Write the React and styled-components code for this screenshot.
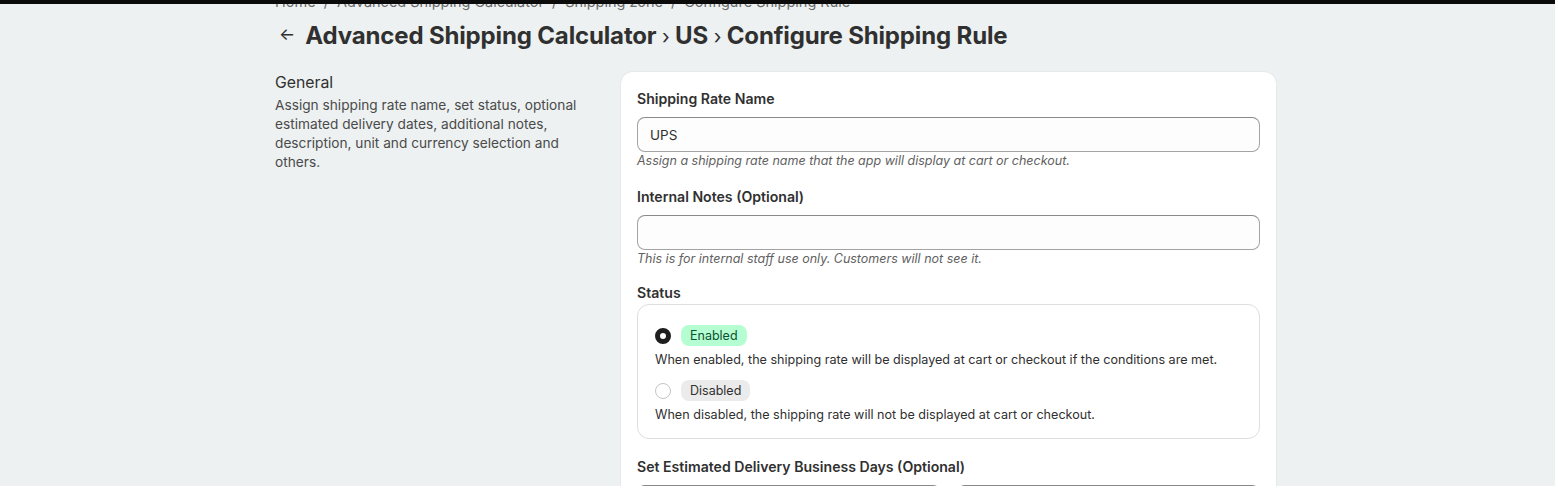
import React from 'react';
import styled, { createGlobalStyle } from 'styled-components';

const GlobalStyle = createGlobalStyle`
  html, body {
    margin: 0;
    padding: 0;
    background: #ffffff;
  }
  body {
    font-family: Inter, "Noto Sans", "Liberation Sans", sans-serif;
    color: #303030;
    -webkit-font-smoothing: antialiased;
  }
`;

const App = () => (
  <>
    <GlobalStyle />
    <Page>
      <Content>
        <Breadcrumb>
          <span>Home</span>
          <Sep>/</Sep>
          <span>Advanced Shipping Calculator</span>
          <Sep>/</Sep>
          <span>Shipping zone</span>
          <Sep>/</Sep>
          <span>Configure Shipping Rule</span>
        </Breadcrumb>
        <TitleRow>
          <BackArrow>←</BackArrow>
          <Title>
            Advanced Shipping Calculator <Chevron>›</Chevron> US <Chevron>›</Chevron> Configure Shipping Rule
          </Title>
        </TitleRow>
        <Layout>
          <Aside>
            <AsideTitle>General</AsideTitle>
            <AsideText>
              Assign shipping rate name, set status, optional estimated delivery dates, additional notes,
              description, unit and currency selection and others.
            </AsideText>
          </Aside>
          <Card>
            <Field>
              <Label>Shipping Rate Name</Label>
              <Input defaultValue="UPS" />
              <Help>Assign a shipping rate name that the app will display at cart or checkout.</Help>
            </Field>
            <Field>
              <Label>Internal Notes (Optional)</Label>
              <Input defaultValue="" />
              <Help>This is for internal staff use only. Customers will not see it.</Help>
            </Field>
            <Field>
              <Label $tight>Status</Label>
              <StatusBox>
                <Option>
                  <OptionHead>
                    <Radio $checked />
                    <Badge $tone="success">Enabled</Badge>
                  </OptionHead>
                  <OptionText>
                    When enabled, the shipping rate will be displayed at cart or checkout if the conditions are met.
                  </OptionText>
                </Option>
                <Option>
                  <OptionHead>
                    <Radio />
                    <Badge>Disabled</Badge>
                  </OptionHead>
                  <OptionText>When disabled, the shipping rate will not be displayed at cart or checkout.</OptionText>
                </Option>
              </StatusBox>
            </Field>
            <Field>
              <Label>Set Estimated Delivery Business Days (Optional)</Label>
              <TwoCols>
                <Input defaultValue="" />
                <Input defaultValue="" />
              </TwoCols>
            </Field>
          </Card>
        </Layout>
      </Content>
    </Page>
  </>
);

const Page = styled.div`
  width: 1555px;
  height: 482px;
  border-top: 4px solid #0b0b0b;
  background: #edf1f1;
  overflow: hidden;
`;

const Content = styled.div`
  margin-left: 275px;
  width: 1001px;
`;

const Breadcrumb = styled.div`
  display: flex;
  align-items: center;
  margin-top: -11px;
  height: 17px;
  font-size: 14.5px;
  line-height: 17px;
  color: #6b6b6b;
`;

const Sep = styled.span`
  margin: 0 8px;
`;

const TitleRow = styled.div`
  display: flex;
  align-items: center;
  gap: 10px;
  margin-top: 10px;
  padding-left: 4px;
  height: 32px;
`;

const BackArrow = styled.span`
  font-size: 17px;
  line-height: 1;
  color: #303030;
  margin-top: -4px;
`;

const Title = styled.h1`
  margin: 0;
  font-size: 24px;
  line-height: 32px;
  font-weight: 700;
  letter-spacing: -0.15px;
  color: #303030;
`;

const Chevron = styled.span`
  font-size: 20px;
  font-weight: 400;
`;

const Layout = styled.div`
  display: grid;
  grid-template-columns: 326px 655px;
  gap: 20px;
  margin-top: 20px;
  align-items: start;
`;

const Aside = styled.div`
  display: flex;
  flex-direction: column;
  gap: 2px;
`;

const AsideTitle = styled.div`
  font-size: 15.8px;
  line-height: 22px;
  color: #303030;
`;

const AsideText = styled.p`
  margin: 0;
  font-size: 13.7px;
  line-height: 19px;
  color: #4a4a4a;
  width: 315px;
`;

const Card = styled.div`
  background: #ffffff;
  border-radius: 12px;
  box-shadow: 0 1px 0 rgba(26, 26, 26, 0.07), 0 0 0 1px rgba(0, 0, 0, 0.03);
  padding: 17px 16px 40px;
  display: flex;
  flex-direction: column;
  gap: 18px;
`;

const Field = styled.div`
  display: flex;
  flex-direction: column;
`;

const Label = styled.div`
  font-size: 14.1px;
  line-height: 20px;
  font-weight: 600;
  color: #303030;
  margin-top: ${(p) => (p.$tight ? '-2px' : '0')};
  margin-bottom: ${(p) => (p.$tight ? '1px' : '8px')};
`;

const Input = styled.input`
  box-sizing: border-box;
  width: 100%;
  height: 35px;
  padding: 0 12px;
  border: 1px solid #a3a3a3;
  border-top-color: #8a8a8a;
  border-radius: 8px;
  background: #fdfdfd;
  font-family: inherit;
  font-size: 13.5px;
  color: #303030;
  outline: none;
`;

const Help = styled.div`
  margin-top: 1px;
  font-size: 12.5px;
  line-height: 16px;
  font-style: italic;
  color: #616161;
`;

const StatusBox = styled.div`
  border: 1px solid #dedede;
  border-radius: 12px;
  padding: 20px 16px 13px 17px;
  display: flex;
  flex-direction: column;
  gap: 10px;
`;

const Option = styled.div`
  display: flex;
  flex-direction: column;
  gap: 4px;
`;

const OptionHead = styled.div`
  display: flex;
  align-items: center;
  gap: 10px;
`;

const Radio = styled.span`
  box-sizing: border-box;
  width: 16px;
  height: 16px;
  border-radius: 50%;
  background: #ffffff;
  border: ${(p) => (p.$checked ? '5px solid #1f1f1f' : '1px solid #c4c4c4')};
`;

const Badge = styled.span`
  display: inline-flex;
  align-items: center;
  height: 21px;
  padding: 0 9px;
  border-radius: 8px;
  font-size: 12.5px;
  background: ${(p) => (p.$tone === 'success' ? '#b4fed2' : '#ebebeb')};
  color: ${(p) => (p.$tone === 'success' ? '#0c5132' : '#303030')};
`;

const OptionText = styled.div`
  font-size: 12.6px;
  line-height: 20px;
  color: #303030;
`;

const TwoCols = styled.div`
  display: grid;
  grid-template-columns: 1fr 1fr;
  gap: 16px;
`;

export default App;
